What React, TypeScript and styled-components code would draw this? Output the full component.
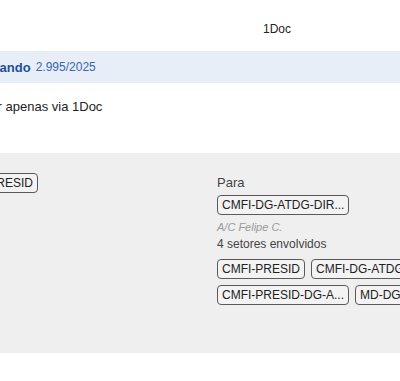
import React from "react";
import styled, { createGlobalStyle } from "styled-components";

const Global = createGlobalStyle`
  html, body { margin: 0; padding: 0; background: #fff; overflow: hidden; }
  body { font-family: "Liberation Sans", Arial, sans-serif; color: #222; }
  #root { width: 400px; height: 381px; overflow: hidden; }
`;

const Page = styled.div`
  width: 676px;
  margin-left: -61px;
  display: flex;
  flex-direction: column;
`;

const Header = styled.div`
  height: 51px;
  display: flex;
  align-items: center;
  justify-content: center;
  font-size: 12px;
  color: #222;
  padding-top: 6px;
  box-sizing: border-box;
`;

const TitleBar = styled.div`
  height: 32px;
  display: flex;
  align-items: center;
  gap: 5px;
  padding-left: 18px;
  background: #e8eef8;
`;

const TitleStrong = styled.span`
  font-size: 13px;
  font-weight: bold;
  color: #1d4f9e;
`;

const TitleNumber = styled.span`
  font-size: 12px;
  color: #3b64b3;
`;

const Notice = styled.div`
  height: 70px;
  padding: 16px 0 0 15px;
  box-sizing: border-box;
  font-size: 13px;
  line-height: 15px;
  color: #222;
`;

const Details = styled.div`
  height: 200px;
  background: #efefef;
  display: grid;
  grid-template-columns: 267px 1fr;
  padding: 20px 0 0 11px;
  box-sizing: border-box;
`;

const Column = styled.div`
  display: flex;
  flex-direction: column;
  align-items: flex-start;
`;

const Label = styled.div`
  font-size: 13px;
  line-height: 15px;
  color: #444;
  margin: 2px 0 5px;
`;

const Attn = styled.div`
  font-size: 11px;
  line-height: 13px;
  font-style: italic;
  color: #9a9a9a;
  margin-top: 6px;
`;

const Count = styled.div`
  font-size: 12px;
  line-height: 15px;
  color: #444;
  margin: 3px 0 7px;
`;

const TagRow = styled.div`
  display: flex;
  gap: 6px;
  white-space: nowrap;
  & + & {
    margin-top: 6px;
  }
`;

const Tag = styled.span`
  display: inline-block;
  font-size: 12px;
  line-height: 14px;
  padding: 2px 4px;
  border: 1px solid #5a5a5a;
  border-radius: 4px;
  background: #f3f3f3;
  color: #222;
`;

export default function App() {
  return (
    <>
      <Global />
      <Page>
        <Header>1Doc</Header>
        <TitleBar>
          <TitleStrong>Memorando</TitleStrong>
          <TitleNumber>2.995/2025</TitleNumber>
        </TitleBar>
        <Notice>Tramitar apenas via 1Doc</Notice>
        <Details>
          <Column>
            <Tag>CMFI-PRESID</Tag>
          </Column>
          <Column>
            <Label>Para</Label>
            <Tag>CMFI-DG-ATDG-DIR...</Tag>
            <Attn>A/C Felipe C.</Attn>
            <Count>4 setores envolvidos</Count>
            <TagRow>
              <Tag>CMFI-PRESID</Tag>
              <Tag>CMFI-DG-ATDG-DIR...</Tag>
            </TagRow>
            <TagRow>
              <Tag>CMFI-PRESID-DG-A...</Tag>
              <Tag>MD-DG-ATDG-CO...</Tag>
            </TagRow>
          </Column>
        </Details>
      </Page>
    </>
  );
}
